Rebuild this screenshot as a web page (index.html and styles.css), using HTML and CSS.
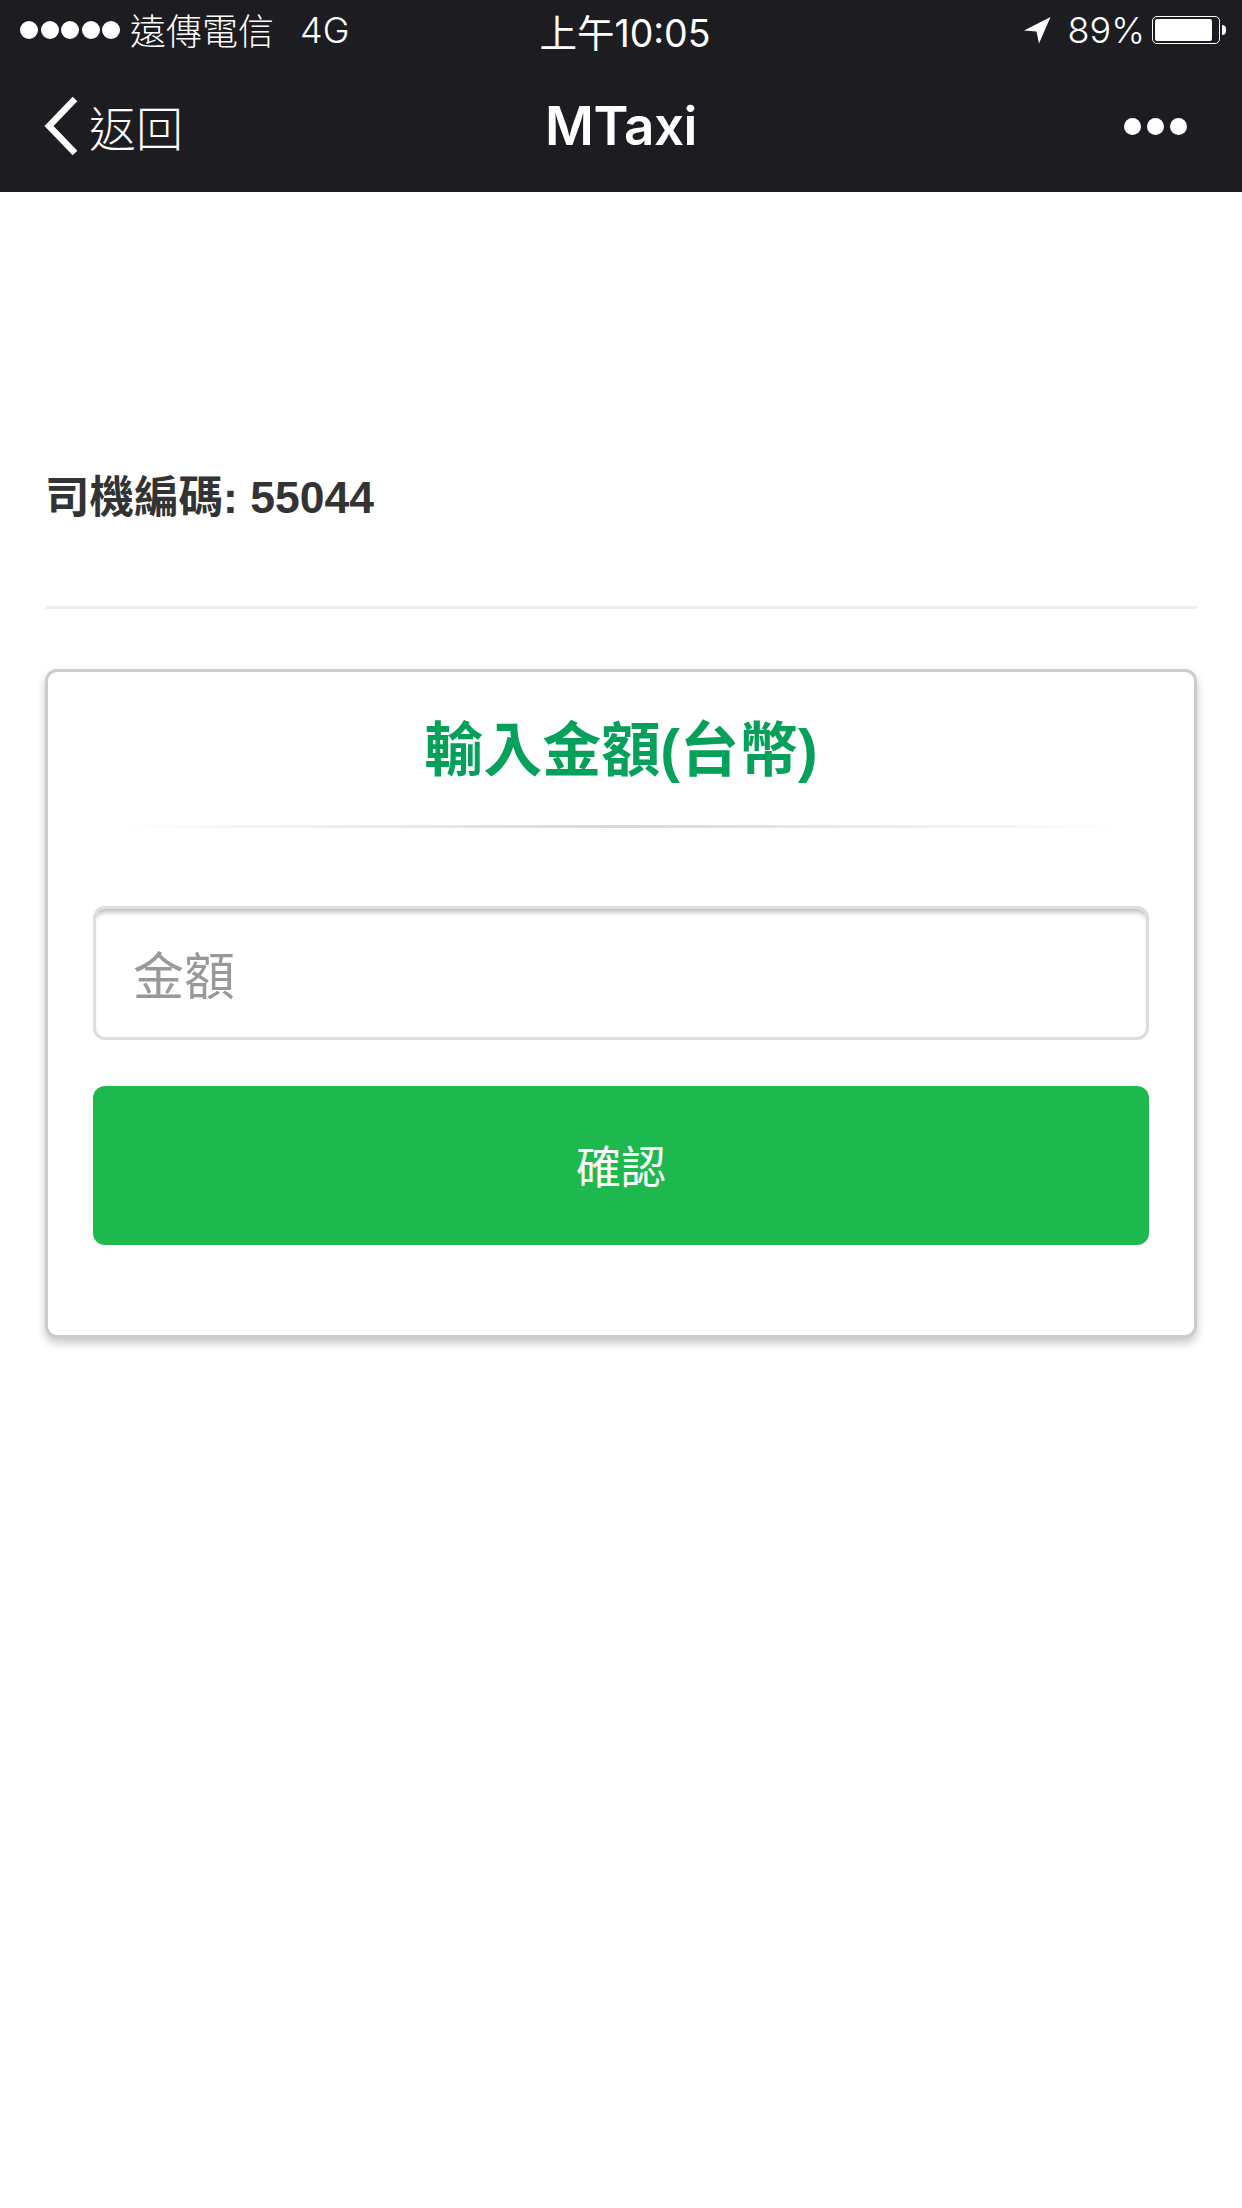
FILE: index.html
```html
<!DOCTYPE html>
<html lang="zh-Hant">
<head>
<meta charset="utf-8">
<title>MTaxi</title>
<link rel="stylesheet" href="styles.css">
</head>
<body>
<header class="topbar">
  <div class="status">
    <div class="status-left">
      <div class="signal"><i></i><i></i><i></i><i></i><i></i></div>
      <span class="carrier">遠傳電信</span>
      <span class="network">4G</span>
    </div>
    <div class="clock">上午10:05</div>
    <div class="status-right">
      <svg class="locate" width="28" height="28" viewBox="0 0 28 28"><path d="M27.500 1 L1 14.500 L13.500 15.500 L16 27.500 Z" fill="#fff"/></svg>
      <span class="percent">89%</span>
      <div class="battery"><div class="battery-fill"></div></div>
      <div class="battery-nub"></div>
    </div>
  </div>
  <nav class="nav">
    <div class="back">
      <svg class="chevron" width="36" height="62" viewBox="0 0 36 62"><path d="M33 4 L7 31 L33 58" fill="none" stroke="#fff" stroke-width="6.500"/></svg>
      <span class="back-label">返回</span>
    </div>
    <div class="nav-title">MTaxi</div>
    <div class="more"><i></i><i></i><i></i></div>
  </nav>
</header>
<main class="page">
  <h4 class="driver">司機編碼: 55044</h4>
  <hr class="rule">
  <section class="card">
    <h3 class="card-title">輸入金額(台幣)</h3>
    <div class="fade-rule"></div>
    <input class="amount" type="text" placeholder="金額">
    <button class="confirm" type="button">確認</button>
  </section>
</main>
</body>
</html>
```
FILE: styles.css
```css
* { box-sizing: border-box; }
html, body { margin: 0; padding: 0; background: #fff; }
body {
  width: 1242px;
  min-height: 2208px;
  font-family: "Liberation Sans", "Noto Sans CJK TC", sans-serif;
}
.topbar { background: #1c1c21; height: 192px; color: #fff; }
.status {
  height: 60px;
  display: grid;
  grid-template-columns: 1fr auto 1fr;
  align-items: center;
  padding: 0 16px 0 20px;
  font-family: "Inter", "Noto Sans CJK TC", sans-serif;
}
.status-left { display: flex; align-items: center; }
.signal { display: flex; width: 110px; }
.signal i { width: 18px; height: 18px; border-radius: 50%; background: #fff; margin-right: 2.500px; }
.carrier { font-size: 36px; font-weight: 300; position: relative; top: -1px; }
.network { margin-left: 26px; font-size: 36px; font-weight: 300; }
.clock { font-size: 37.500px; font-weight: 400; margin-left: 4px; }
.status-right { display: flex; align-items: center; justify-content: flex-end; }
.locate { margin-right: 17px; }
.percent { font-size: 36px; font-weight: 300; margin-right: 7px; }
.battery {
  width: 68px; height: 28px;
  border: 1.500px solid #fff;
  border-radius: 5px;
  padding: 2px;
}
.battery-fill { width: 57px; height: 100%; background: #fff; border-radius: 2px; }
.battery-nub { width: 4px; height: 10px; margin-left: 2px; background: #fff; border-radius: 0 4px 4px 0; }
.nav {
  height: 132px;
  display: grid;
  grid-template-columns: 1fr auto 1fr;
  align-items: center;
}
.back { display: flex; align-items: center; padding-left: 42px; }
.chevron { margin-right: 11px; }
.back-label { font-family: "Noto Sans CJK TC", sans-serif; font-size: 47px; font-weight: 300; line-height: 1; position: relative; top: -1px; }
.nav-title { font-family: "Inter", sans-serif; font-size: 53px; font-weight: 600; letter-spacing: -0.5px; }
.more { display: flex; justify-content: flex-end; gap: 6px; padding-right: 55px; }
.more i { width: 17px; height: 17px; border-radius: 50%; background: #fff; }
.page { padding: 0 45px; }
.driver {
  margin: 0;
  padding-top: 277px;
  height: 414px;
  line-height: 58px;
  font-size: 44.500px;
  font-weight: 700;
  color: #333;
}
.rule { margin: 0; border: 0; height: 3px; background: #eee; }
.card {
  margin-top: 60px;
  height: 669px;
  border: 3px solid #ccc;
  border-radius: 12px;
  box-shadow: 0 5px 10px rgba(0, 0, 0, 0.22);
  background: #fff;
  padding: 0 45px;
  display: flex;
  flex-direction: column;
}
.card-title {
  margin: 0;
  height: 153px;
  padding-top: 43px;
  line-height: 72px;
  font-size: 59px;
  font-weight: 700;
  color: #05a05a;
  text-align: center;
}
.fade-rule {
  height: 3px;
  margin: 0 20px 78px;
  background: linear-gradient(to right, rgba(0,0,0,0), rgba(0,0,0,0.15), rgba(0,0,0,0));
}
.amount {
  width: 100%;
  height: 134px;
  border: 3px solid #ddd;
  border-radius: 12px;
  box-shadow: inset 0 6px 5px -3px rgba(0, 0, 0, 0.28);
  padding: 0 37px;
  font-family: "Noto Sans CJK TC", sans-serif;
  font-size: 51px;
  font-weight: 400;
  color: #333;
  background: #fff;
  outline: none;
}
.amount::placeholder { color: #999; opacity: 1; }
.confirm {
  margin-top: 46px;
  width: 100%;
  height: 159px;
  border: 0;
  border-radius: 12px;
  background: #1db94e;
  color: #fff;
  font-family: "Noto Sans CJK TC", sans-serif;
  font-size: 45px;
  font-weight: 400;
  padding: 0 0 2px;
}
```
